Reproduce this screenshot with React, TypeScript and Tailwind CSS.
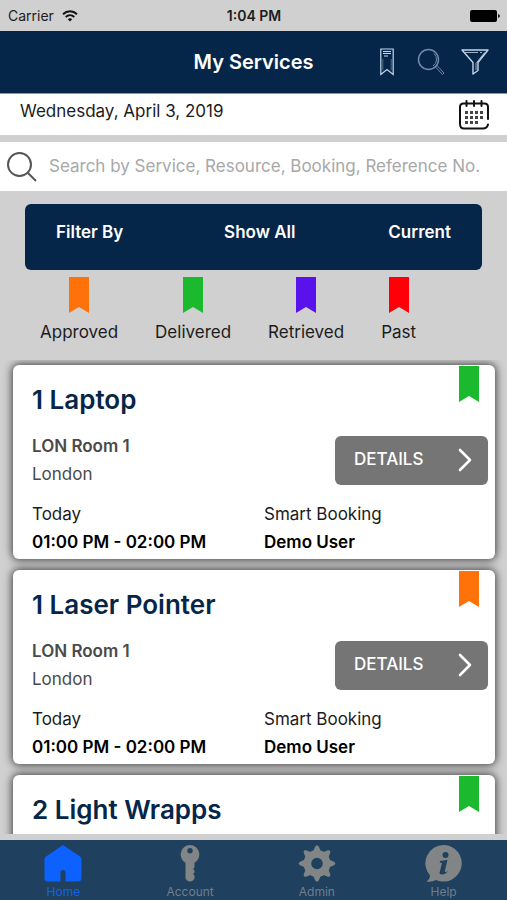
import type { ReactNode } from "react";

type Status = "approved" | "delivered" | "retrieved" | "past";

interface Booking {
  room: string;
  city: string;
  day: string;
  time: string;
  type: string;
  user: string;
}

interface Service {
  title: string;
  status: Status;
  booking?: Booking;
}

const flagColors: Record<Status, string> = {
  approved: "text-[#ff7209]",
  delivered: "text-[#1bb92d]",
  retrieved: "text-[#5a12ec]",
  past: "text-[#ff0008]",
};

const legend: { status: Status; label: string }[] = [
  { status: "approved", label: "Approved" },
  { status: "delivered", label: "Delivered" },
  { status: "retrieved", label: "Retrieved" },
  { status: "past", label: "Past" },
];

const booking: Booking = {
  room: "LON Room 1",
  city: "London",
  day: "Today",
  time: "01:00 PM - 02:00 PM",
  type: "Smart Booking",
  user: "Demo User",
};

const services: Service[] = [
  { title: "1 Laptop", status: "delivered", booking },
  { title: "1 Laser Pointer", status: "approved", booking },
  { title: "2 Light Wrapps", status: "delivered" },
];

function Flag({ status }: { status: Status }) {
  return (
    <svg className={`h-9 w-5 ${flagColors[status]}`} viewBox="0 0 20 36" fill="currentColor" aria-hidden="true">
      <path d="M0 0H20V36L10 30L0 36Z" />
    </svg>
  );
}

function StatusBar() {
  return (
    <div className="grid h-[31px] shrink-0 grid-cols-3 items-center pr-[7px] pl-2 text-sm text-[#1c1c1c]">
      <div className="flex items-center gap-2">
        <span>Carrier</span>
        <svg className="h-3 w-4" viewBox="0 0 16 12" fill="none" stroke="#111" strokeWidth="2" aria-hidden="true">
          <path d="M1 4.2C5 .4 11 .4 15 4.2" />
          <path d="M3.7 7C6.2 4.7 9.8 4.7 12.3 7" />
          <path d="M5.8 9.2C7.1 8 8.9 8 10.2 9.2L8 11.4Z" fill="#111" stroke="none" />
        </svg>
      </div>
      <span className="text-center font-semibold">1:04 PM</span>
      <svg className="h-3 w-[30px] justify-self-end" viewBox="0 0 30 12" aria-hidden="true">
        <rect width="27" height="12" rx="2" fill="#000" />
        <path d="M28 4Q30 4.500 30 6T28 8Z" fill="#222" />
      </svg>
    </div>
  );
}

function Header() {
  return (
    <header className="grid h-[63px] shrink-0 grid-cols-[1fr_auto_1fr] items-center border-b border-[#8796ad] bg-[#052648] px-[18px] text-white">
      <h1 className="col-start-2 text-xl font-semibold">My Services</h1>
      <div className="flex items-center justify-end gap-4 text-[#c5d5ea]">
        <button type="button" aria-label="Bookmarks" className="pr-1.5">
          <svg className="h-7 w-4" viewBox="0 0 16 28" fill="none" stroke="currentColor" strokeWidth="1.2">
            <path d="M1.800 1H14.200V26.500L8 21.500L1.800 26.500Z" />
            <path d="M4 3.500H12M4 5.500H12M5 8H9" />
            <path d="M3.800 11V22.500M12.200 11V22.500" strokeWidth=".4" />
          </svg>
        </button>
        <button type="button" aria-label="Search" className="text-[#7089a7]">
          <svg className="size-7" viewBox="0 0 28 28" fill="none" stroke="currentColor" strokeWidth="1.500">
            <circle cx="11.500" cy="11.500" r="10" />
            <path d="M18.500 19L20 17.500L27 25L25.500 26.500Z" strokeWidth="1" />
            <path d="M17 5.500A8 8 0 0 1 16 18" strokeWidth="1" />
          </svg>
        </button>
        <button type="button" aria-label="Filter">
          <svg className="size-7" viewBox="0 0 28 28" fill="none" stroke="currentColor" strokeWidth="1.400" strokeLinejoin="round">
            <path d="M1 2H27L17 14.500V22.500L12 26V14.500Z" />
            <path d="M3.500 4.500H17M19 4.500H21M23.500 4.500L15 15.500V22" strokeWidth=".8" />
          </svg>
        </button>
      </div>
    </header>
  );
}

function CalendarIcon() {
  return (
    <svg className="size-[30px]" viewBox="0 0 30 30" fill="none" stroke="#111" strokeWidth="2" strokeLinecap="round" aria-hidden="true">
      <path d="M29 19V7Q29 3.500 25.500 3.500H4.500Q1 3.500 1 7V24Q1 28.500 5 28.500H24Q28 28.500 29 24.500" />
      <path d="M7.500 1V6M15 1V6M22.500 1V6" />
      <path
        d="M6 12.500H24M6 17.500H24M6 22.500H19"
        stroke="#444"
        strokeWidth="3"
        strokeLinecap="butt"
        strokeDasharray="3 2"
      />
    </svg>
  );
}

function ServiceCard({ service }: { service: Service }) {
  const details = service.booking;
  return (
    <article className="relative min-h-[194px] shrink-0 rounded-md bg-white pt-[15px] pr-[7px] pb-[3px] pl-[19px] shadow-[0_0_9px_1px_#3c3c3c]">
      <div className="absolute top-px right-4">
        <Flag status={service.status} />
      </div>
      <h2 className="text-[26px] leading-10 font-semibold text-[#052648]">{service.title}</h2>
      {details && (
        <>
          <div className="mt-3 flex items-center justify-between">
            <div className="leading-7 text-[#4a4a4a]">
              <p className="font-semibold">{details.room}</p>
              <p>{details.city}</p>
            </div>
            <button
              type="button"
              className="flex h-[49px] w-[153px] items-center justify-between rounded-md bg-[#757575] pr-4 pl-[19px] font-medium text-white"
            >
              DETAILS
              <svg className="h-6 w-4" viewBox="0 0 16 24" fill="none" stroke="currentColor" strokeWidth="2.600" strokeLinecap="round" strokeLinejoin="round" aria-hidden="true">
                <path d="M4 2L14 12L4 22" />
              </svg>
            </button>
          </div>
          <div className="mt-3 grid grid-cols-2 leading-7 text-[#1c1c1c]">
            <div>
              <p>{details.day}</p>
              <p className="font-semibold text-black">{details.time}</p>
            </div>
            <div className="pl-1">
              <p>{details.type}</p>
              <p className="font-semibold text-black">{details.user}</p>
            </div>
          </div>
        </>
      )}
    </article>
  );
}

function Tab({ label, active, children }: { label: string; active?: boolean; children: ReactNode }) {
  return (
    <a
      href="#"
      aria-current={active ? "page" : undefined}
      className={`flex flex-1 flex-col items-center gap-[3px] pt-[5px] text-xs leading-3 ${active ? "text-[#1264e4]" : "text-[#6f7f8d]"}`}
    >
      <svg className={`size-[38px] ${active ? "text-[#0d62ff]" : "text-[#828586]"}`} viewBox="0 0 38 38" fill="currentColor" aria-hidden="true">
        {children}
      </svg>
      {label}
    </a>
  );
}

function TabBar() {
  return (
    <nav className="flex h-[60px] shrink-0 bg-[#1f405f]">
      <Tab label="Home" active>
        <path d="M19 0L36 11.500Q37.500 12.500 37.500 14V33Q37.500 36.500 34 36.500H21.500V27.500Q21.500 25 19 25T16.500 27.500V36.500H4Q.5 36.500 .5 33V14Q.5 12.500 2 11.500Z" />
      </Tab>
      <Tab label="Account">
        <path
          fillRule="evenodd"
          d="M19 0A9.500 9.500 0 0 0 14.500 17.800V33.500Q16 36.500 19 36.500Q22 36.500 23.500 33.500V30.500L22 29L23.500 27.500V25.500L22 24L23.500 22.500V17.800A9.500 9.500 0 0 0 19 0ZM19 3A2.700 2.700 0 1 1 19 8.400A2.700 2.700 0 0 1 19 3Z"
        />
      </Tab>
      <Tab label="Admin">
        <path fillRule="evenodd" d="M19 5A13.500 13.500 0 1 0 19 32A13.500 13.500 0 1 0 19 5ZM19 12.700A5.800 5.800 0 1 1 19 24.300A5.800 5.800 0 1 1 19 12.700Z" />
        {[0, 45, 90, 135, 180, 225, 270, 315].map((angle) => (
          <path key={angle} d="M15 7L17 2Q19 -1.500 21 2L23 7Z" transform={`rotate(${angle} 19 18.500)`} />
        ))}
      </Tab>
      <Tab label="Help">
        <path d="M19 0A18.300 18.300 0 1 1 11 35Q6.500 37.500 1.500 36.500Q5 34 5 30.500A18.300 18.300 0 0 1 19 0Z" />
        <circle cx="20.500" cy="10" r="3" fill="#1f405f" />
        <path
          d="M15 16Q19 15.500 22.500 14.800L19.800 26Q19.500 27.500 21 27L23 26Q20.500 29.500 17 29.500T15 26L17 18L14.700 17.500Z"
          fill="#1f405f"
        />
      </Tab>
    </nav>
  );
}

export default function App() {
  return (
    <div className="flex h-screen flex-col overflow-hidden bg-[#d0d0d0] font-['Inter','Liberation_Sans',sans-serif] text-[17px]">
      <StatusBar />
      <Header />
      <div className="flex h-[41px] shrink-0 items-center justify-between bg-white pr-[18px] pl-5 text-[#1c1c1c]">
        <time dateTime="2019-04-03" className="pb-[5px]">
          Wednesday, April 3, 2019
        </time>
        <button type="button" aria-label="Choose date">
          <CalendarIcon />
        </button>
      </div>
      <label className="mt-[7px] flex h-[49px] shrink-0 items-center gap-3 bg-white pr-2 pl-[7px]">
        <svg className="size-[30px] shrink-0" viewBox="0 0 30 30" fill="none" stroke="#555" strokeWidth="2" aria-hidden="true">
          <circle cx="12.500" cy="12.500" r="11.500" />
          <path d="M20.500 20.500L29 29" />
        </svg>
        <input
          type="text"
          aria-label="Search services"
          placeholder="Search by Service, Resource, Booking, Reference No."
          className="min-w-0 flex-1 bg-transparent outline-none placeholder:text-[#a8a8a8]"
        />
      </label>
      <div className="mx-[25px] mt-[13px] flex h-[66px] shrink-0 items-center justify-between rounded-md bg-[#052648] px-[31px] pb-2 font-semibold text-white">
        <button type="button">Filter By</button>
        <button type="button" className="pl-2">Show All</button>
        <button type="button">Current</button>
      </div>
      <ul className="mt-[7px] flex shrink-0 gap-[37px] pl-10 text-[#1c1c1c]">
        {legend.map(({ status, label }) => (
          <li key={status} className="flex flex-col items-center gap-[7px] leading-6">
            <Flag status={status} />
            {label}
          </li>
        ))}
      </ul>
      <main className="mt-4 mb-[6px] flex min-h-0 flex-1 flex-col gap-[11px] overflow-hidden pt-[5px] pr-3 pl-[13px]">
        {services.map((service) => (
          <ServiceCard key={service.title} service={service} />
        ))}
      </main>
      <TabBar />
    </div>
  );
}
